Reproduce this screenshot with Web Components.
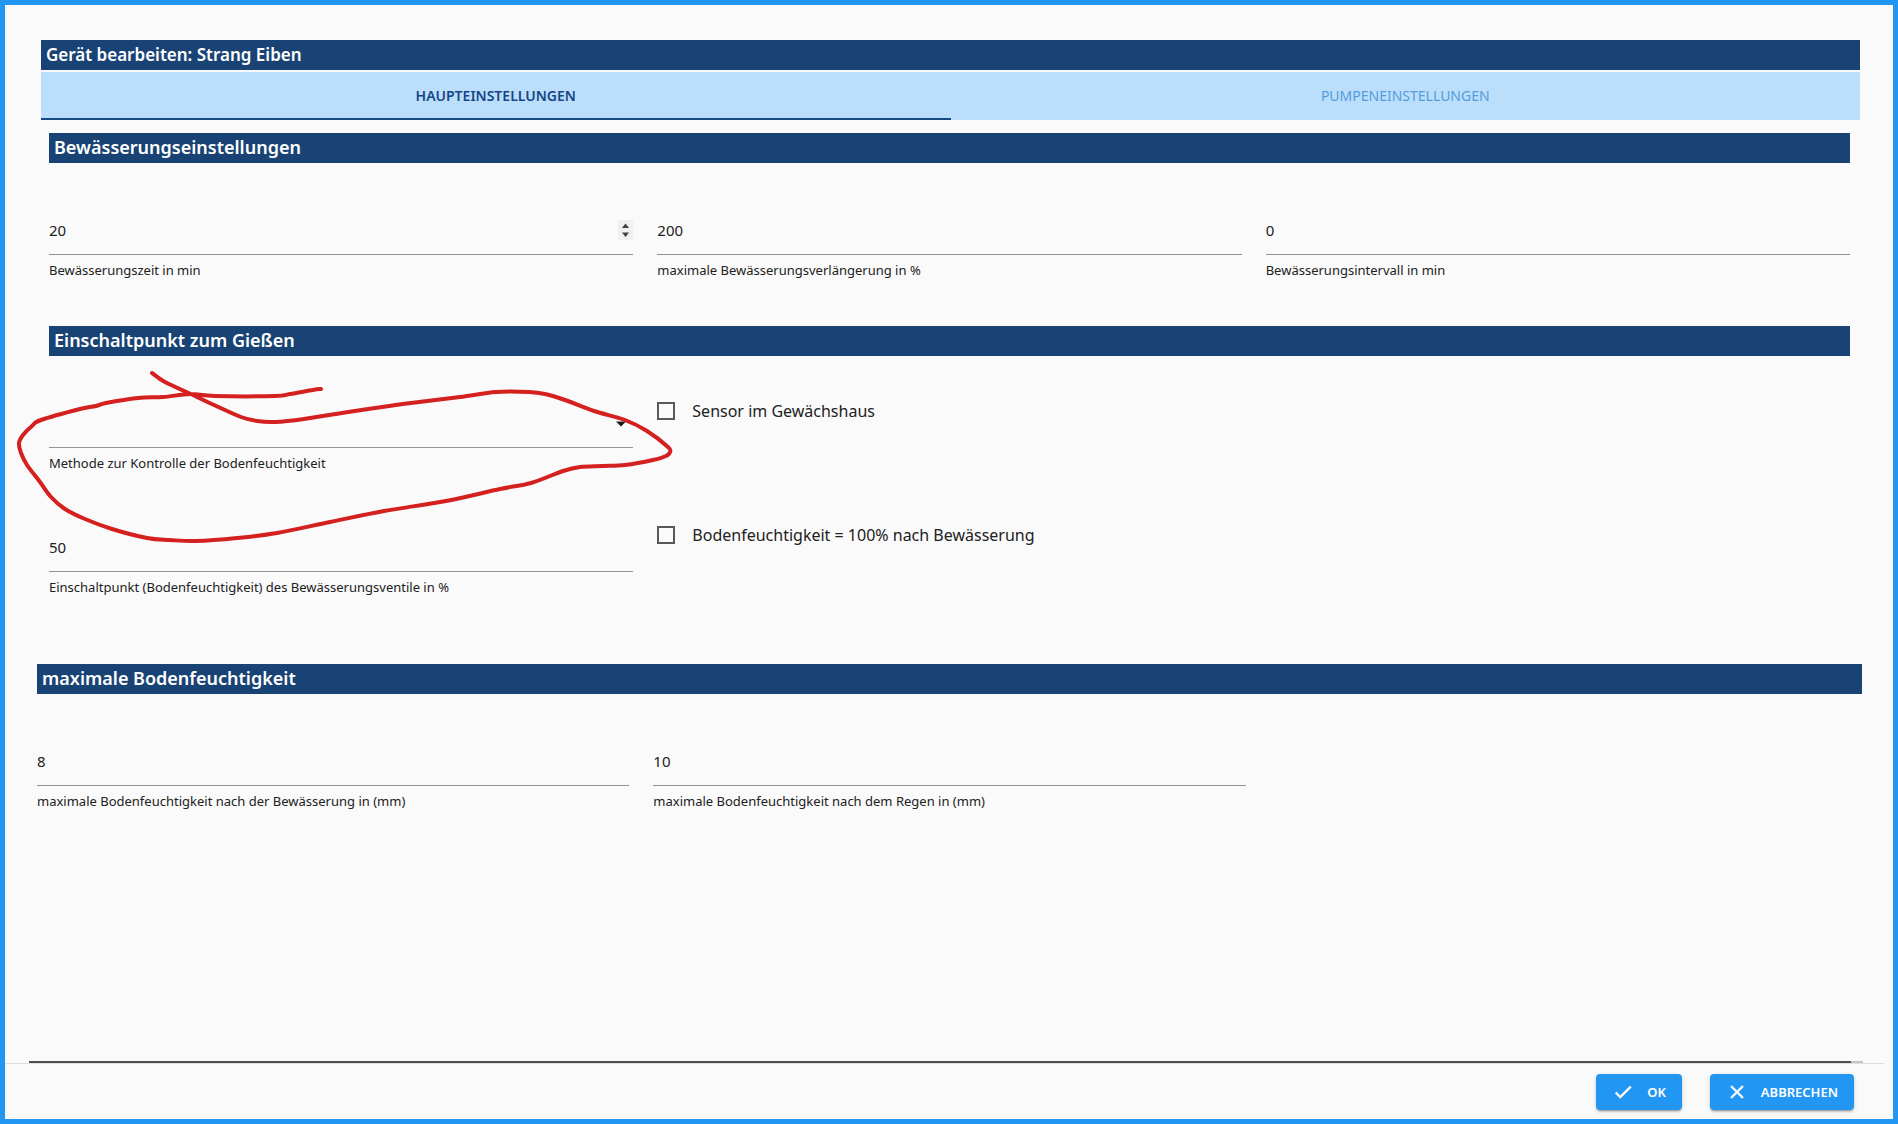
<!DOCTYPE html>
<html lang="de">
<head>
<meta charset="utf-8">
<title>Gerät bearbeiten</title>
<style>
  html, body { margin: 0; }
  body { background: #fafafa; font-family: "Noto Sans", "Open Sans", sans-serif; color: #212121; }
</style>
</head>
<body>
<script>
const define = (name, html, setup) => {
  const template = document.createElement('template');
  template.innerHTML = '<style>*{box-sizing:border-box}</style>' + html;
  customElements.define(name, class extends HTMLElement {
    connectedCallback() {
      if (this.shadowRoot) return;
      const root = this.attachShadow({ mode: 'open' });
      root.append(template.content.cloneNode(true));
      if (setup) setup(this, root);
    }
  });
};

/* Blue heading strip */
define('heading-bar', `
  <style>
    :host { display: block; background: #184374; color: #fff; }
    h2 { margin: 0; padding: 0 5px 2px; font-size: 18px; font-weight: 600; line-height: 28px; }
    :host([small]) h2 { padding: 0 5px; font-size: 17px; line-height: 30px; }
  </style>
  <h2><slot></slot></h2>`);

/* Two equal tabs */
define('tab-strip', `
  <style>
    :host { display: flex; background: #bbdefb; }
    button { flex: 1 1 0; height: 48px; border: 0; border-bottom: 2px solid transparent; padding: 2px 16px 0;
      background: none; font: 400 14px/20px "Noto Sans", sans-serif; color: #539ddb; text-transform: uppercase; }
    button[aria-selected=true] { font-weight: 600; color: #164687; border-bottom-color: #164b82; }
  </style>
  <div role="tablist" style="display:contents">
    <button type="button" role="tab" aria-selected="true">Haupteinstellungen</button>
    <button type="button" role="tab" aria-selected="false">Pumpeneinstellungen</button>
  </div>`);

/* Three-column form grid */
define('form-grid', `
  <style>
    :host { display: grid; grid-template-columns: repeat(3, 1fr); column-gap: 24px; row-gap: 49px; padding-top: 43px; align-items: start; }
    ::slotted([span2]) { grid-column: span 2; }
  </style>
  <slot></slot>`);

/* Number input with its caption underneath */
define('number-field', `
  <style>
    :host { display: block; }
    .box { display: grid; align-items: center; justify-items: end; border-bottom: 1px solid #949494; }
    input, svg { grid-area: 1 / 1; }
    input { appearance: textfield; display: block; width: 100%; height: 48px; padding: 8px 0; border: 0;
      border-radius: 0; background: none; outline: none; font: 400 15px/20px "Noto Sans", sans-serif; color: #212121; }
    input::-webkit-inner-spin-button { appearance: none; }
    svg { display: none; width: 15px; height: 20px; background: #f0f0f0; fill: #404040; pointer-events: none; }
    :host([spin]) svg { display: block; }
    label { display: block; margin-top: 5px; padding-bottom: 1px; font-size: 13px; line-height: 20px; }
  </style>
  <div class="box">
    <input id="field" type="number">
    <svg viewBox="0 0 15 20" aria-hidden="true"><path d="M4 8l3.5-4.5L11 8zM4 12.500h7L7.500 17z"/></svg>
  </div>
  <label for="field"><slot></slot></label>`,
  (host, root) => { root.querySelector('input').value = host.getAttribute('value'); });

/* Drop-down with its caption underneath */
define('select-field', `
  <style>
    :host { display: block; }
    .box { display: grid; align-items: center; justify-items: end; border-bottom: 1px solid #949494; }
    select, svg { grid-area: 1 / 1; }
    select { appearance: none; width: 100%; height: 48px; border: 0; background: none; outline: none;
      font: 400 15px/20px "Noto Sans", sans-serif; color: #212121; }
    svg { width: 24px; height: 24px; pointer-events: none; }
    label { display: block; margin-top: 5px; padding-bottom: 1px; font-size: 13px; line-height: 20px; }
  </style>
  <div class="box">
    <select id="field"><option></option></select>
    <svg viewBox="0 0 24 24" fill="#1c1c1c"><path d="M7 10.500l5 5 5-5z"/></svg>
  </div>
  <label for="field"><slot></slot></label>`);

/* Tick box and caption */
define('check-field', `
  <style>
    :host { display: block; }
    label { display: flex; align-items: center; gap: 17px; font-size: 16px; line-height: 24px; }
    input { appearance: none; flex: none; width: 18px; height: 18px; margin: 0; border: 2px solid #585858; }
    input:checked { background: #2196f3; }
  </style>
  <label><input type="checkbox"><span><slot></slot></span></label>`);

/* Raised button with a leading icon */
define('action-button', `
  <style>
    :host { display: block; }
    button { display: flex; align-items: center; gap: 13px; height: 36px; padding: 0 16px; border: 0; border-radius: 4px;
      background: #2196f3; color: #fff; font: 600 13px/20px "Noto Sans", sans-serif; text-transform: uppercase;
      box-shadow: 0 3px 1px -2px rgba(0,0,0,.2), 0 2px 2px rgba(0,0,0,.14), 0 1px 5px rgba(0,0,0,.12); }
    svg { width: 22px; height: 22px; fill: currentColor; stroke: currentColor; stroke-width: .6; }
  </style>
  <button type="button"><svg viewBox="0 0 24 24" aria-hidden="true"><path/></svg><slot></slot></button>`,
  (host, root) => root.querySelector('path').setAttribute('d', {
    check: 'M9 16.17L4.83 12l-1.42 1.41L9 19 21 7l-1.41-1.41z',
    close: 'M19 6.41L17.59 5 12 10.59 6.41 5 5 6.41 10.59 12 5 17.59 6.41 19 12 13.41 17.59 19 19 17.59 13.41 12z'
  }[host.getAttribute('icon')]));

/* Freehand red marker stroke, smoothed through its points; starts at the frame's outer corner */
define('ink-mark', `
  <style>
    :host { position: absolute; left: -5px; top: -5px; pointer-events: none; }
    svg { display: block; overflow: visible; }
  </style>
  <svg width="700" height="560" fill="none" stroke="#d4201f" stroke-width="4" stroke-linecap="round" stroke-linejoin="round"><path/></svg>`,
  (host, root) => {
    const p = [[152,373],[165,382],[193,395],[214,405],[241,417],[257,421],[275,422],[304,419],[348,412],[375,408],[411,403],[460,397],[496,392],[529,392],[545,394],[565,400],[594,411],[625,420],[647,431],[668,447],[670,452],[666,456],[653,460],[625,465],[603,466],[580,467],[563,471],[531,483],[500,489],[446,501],[384,511],[330,522],[277,533],[237,538],[196,541],[170,540],[147,538],[112,529],[85,519],[65,509],[51,497],[40,482],[27,465],[21,453],[19,443],[23,435],[32,426],[41,420],[80,409],[96,406],[106,403],[138,398],[163,397],[190,394],[215,396],[275,396],[290,394],[313,390],[321,389]];
    let d = `M${p[0]}`;
    for (let i = 0; i < p.length - 1; i++) {
      const a = p[i - 1] || p[i], b = p[i], c = p[i + 1], e = p[i + 2] || c;
      d += `C${b[0] + (c[0] - a[0]) / 6} ${b[1] + (c[1] - a[1]) / 6} ${c[0] - (e[0] - b[0]) / 6} ${c[1] - (e[1] - b[1]) / 6} ${c[0]} ${c[1]}`;
    }
    root.querySelector('path').setAttribute('d', d);
  });

/* Dialog frame: scroll area above, actions below */
define('device-dialog', `
  <style>
    :host { display: flex; flex-direction: column; min-height: 100vh; box-sizing: border-box; border: 5px solid #2196f3; position: relative; background: #fafafa; }
    main { flex: 1; display: flex; flex-direction: column; padding: 35px 31px 0 32px; }
    .rule { display: flex; margin: auto -1px 0 -8px; height: 2px; }
    .rule i { flex: 1; background: #505050; }
    .rule b { width: 12px; background: #c4c4c4; }
    hr { margin: 0 9px 0 0; border: 0; height: 1px; background: #dedede; }
    footer { display: flex; justify-content: flex-end; gap: 28px; padding: 10px 39px 9px; }
  </style>
  <main><slot></slot><div class="rule"><i></i><b></b></div></main>
  <hr>
  <footer><slot name="actions"></slot></footer>
  <slot name="overlay"></slot>`);

/* Head block: title, tabs and the panel of the active tab */
define('tab-page', `
  <style>
    :host { display: block; padding: 0 2px 21px 4px; }
    .tabs { padding-top: 2px; }
    .panel { padding: 13px 10px 0 8px; }
  </style>
  <slot name="title"></slot>
  <div class="tabs"><tab-strip></tab-strip></div>
  <div class="panel"><slot></slot></div>`);

define('form-section', `
  <style>:host { display: block; padding-bottom: 45px; }</style>
  <slot></slot>`);
</script>

<device-dialog>
  <tab-page>
    <heading-bar slot="title" small>Gerät bearbeiten: Strang Eiben</heading-bar>
    <form-section>
      <heading-bar>Bewässerungseinstellungen</heading-bar>
      <form-grid>
        <number-field value="20" spin>Bewässerungszeit in min</number-field>
        <number-field value="200">maximale Bewässerungsverlängerung in %</number-field>
        <number-field value="0">Bewässerungsintervall in min</number-field>
      </form-grid>
    </form-section>
    <form-section>
      <heading-bar>Einschaltpunkt zum Gießen</heading-bar>
      <form-grid>
        <select-field>Methode zur Kontrolle der Bodenfeuchtigkeit</select-field>
        <check-field span2>Sensor im Gewächshaus</check-field>
        <number-field value="50">Einschaltpunkt (Bodenfeuchtigkeit) des Bewässerungsventile in %</number-field>
        <check-field span2>Bodenfeuchtigkeit = 100% nach Bewässerung</check-field>
      </form-grid>
    </form-section>
  </tab-page>
  <form-section>
    <heading-bar>maximale Bodenfeuchtigkeit</heading-bar>
    <form-grid>
      <number-field value="8">maximale Bodenfeuchtigkeit nach der Bewässerung in (mm)</number-field>
      <number-field value="10">maximale Bodenfeuchtigkeit nach dem Regen in (mm)</number-field>
    </form-grid>
  </form-section>
  <action-button slot="actions" icon="check">OK</action-button>
  <action-button slot="actions" icon="close">Abbrechen</action-button>
  <ink-mark slot="overlay"></ink-mark>
</device-dialog>
</body>
</html>
